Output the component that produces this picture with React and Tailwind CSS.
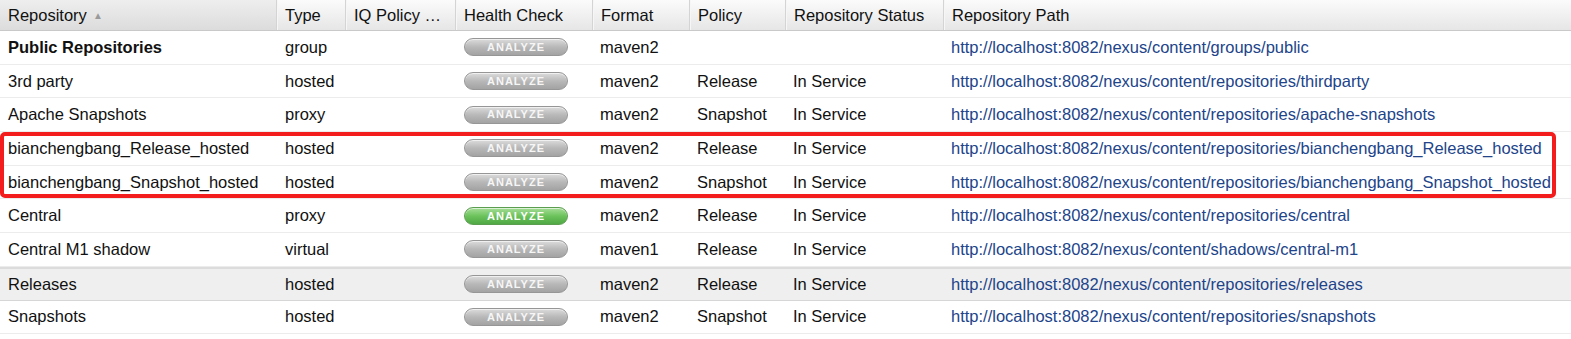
import React from 'react';

const cols = 'grid grid-cols-[276px_69px_110px_137px_97px_96px_158px_1fr]';

const rows = [
  { name: 'Public Repositories', type: 'group', format: 'maven2', policy: '', status: '', path: 'http://localhost:8082/nexus/content/groups/public', bold: true },
  { name: '3rd party', type: 'hosted', format: 'maven2', policy: 'Release', status: 'In Service', path: 'http://localhost:8082/nexus/content/repositories/thirdparty' },
  { name: 'Apache Snapshots', type: 'proxy', format: 'maven2', policy: 'Snapshot', status: 'In Service', path: 'http://localhost:8082/nexus/content/repositories/apache-snapshots' },
  { name: 'bianchengbang_Release_hosted', type: 'hosted', format: 'maven2', policy: 'Release', status: 'In Service', path: 'http://localhost:8082/nexus/content/repositories/bianchengbang_Release_hosted' },
  { name: 'bianchengbang_Snapshot_hosted', type: 'hosted', format: 'maven2', policy: 'Snapshot', status: 'In Service', path: 'http://localhost:8082/nexus/content/repositories/bianchengbang_Snapshot_hosted' },
  { name: 'Central', type: 'proxy', format: 'maven2', policy: 'Release', status: 'In Service', path: 'http://localhost:8082/nexus/content/repositories/central', green: true },
  { name: 'Central M1 shadow', type: 'virtual', format: 'maven1', policy: 'Release', status: 'In Service', path: 'http://localhost:8082/nexus/content/shadows/central-m1' },
  { name: 'Releases', type: 'hosted', format: 'maven2', policy: 'Release', status: 'In Service', path: 'http://localhost:8082/nexus/content/repositories/releases', selected: true },
  { name: 'Snapshots', type: 'hosted', format: 'maven2', policy: 'Snapshot', status: 'In Service', path: 'http://localhost:8082/nexus/content/repositories/snapshots' },
];

const headers = ['Repository', 'Type', 'IQ Policy …', 'Health Check', 'Format', 'Policy', 'Repository Status', 'Repository Path'];

const Analyze = ({ green }) => (
  <span
    className={
      green
        ? 'ml-[1px] flex h-[18px] w-[104px] items-center justify-center rounded-full border border-[#5c9e50] bg-gradient-to-b from-[#a6dd97] via-[#6cc35c] to-[#4fa844] text-[11px] font-bold tracking-[1px] text-white shadow-[inset_0_1px_0_rgba(255,255,255,0.6)]'
        : 'ml-[1px] flex h-[18px] w-[104px] items-center justify-center rounded-full border border-[#969696] bg-gradient-to-b from-[#dcdcdc] via-[#b8b8b8] to-[#a3a3a3] text-[11px] font-bold tracking-[1px] text-[#f6f6f6] shadow-[inset_0_1px_0_rgba(255,255,255,0.6)]'
    }
  >
    ANALYZE
  </span>
);

const App = () => {
  return (
    <div className="relative h-[339px] w-[1571px] overflow-hidden bg-white font-['Liberation_Sans',Arial,sans-serif] text-[16.5px] text-[#111]">
      <div className={`${cols} h-[31px] border-b border-[#c9c9c9] bg-gradient-to-b from-[#fbfbfb] to-[#e6e6e6]`}>
        {headers.map((h, i) => (
          <div
            key={h}
            className={`flex items-center pl-[8px] ${i > 0 ? 'border-l border-l-[#d4d4d4] shadow-[inset_1px_0_0_#f6f6f6]' : ''} ${i === 0 ? 'bg-gradient-to-b from-[#eeeeee] to-[#dcdcdc]' : ''}`}
          >
            <span>{h}</span>
            {i === 0 && <span className="ml-[6px] mt-[1px] text-[10px] text-[#9a9a9a]">▲</span>}
          </div>
        ))}
      </div>
      {rows.map((r) => (
        <div
          key={r.name}
          className={`${cols} h-[33.7px] border-b ${r.selected ? 'border-[#d6d6d6] border-t-2 border-t-[#dcdcdc] bg-[#efefef]' : 'border-[#ececec]'}`}
        >
          <div className={`flex items-center pl-[8px] ${r.bold ? 'font-bold' : ''}`}>{r.name}</div>
          <div className="flex items-center pl-[9px]">{r.type}</div>
          <div />
          <div className="flex items-center pl-[8px]">
            <Analyze green={r.green} />
          </div>
          <div className="flex items-center pl-[8px]">{r.format}</div>
          <div className="flex items-center pl-[8px]">{r.policy}</div>
          <div className="flex items-center pl-[8px]">{r.status}</div>
          <div className="flex items-center pl-[8px] text-[#21448a]">{r.path}</div>
        </div>
      ))}
      <div className="pointer-events-none absolute left-[0px] top-[132px] h-[66px] w-[1556px] rounded-[5px] border-[4px] border-[#f41d1d]" />
    </div>
  );
};

export default App;
